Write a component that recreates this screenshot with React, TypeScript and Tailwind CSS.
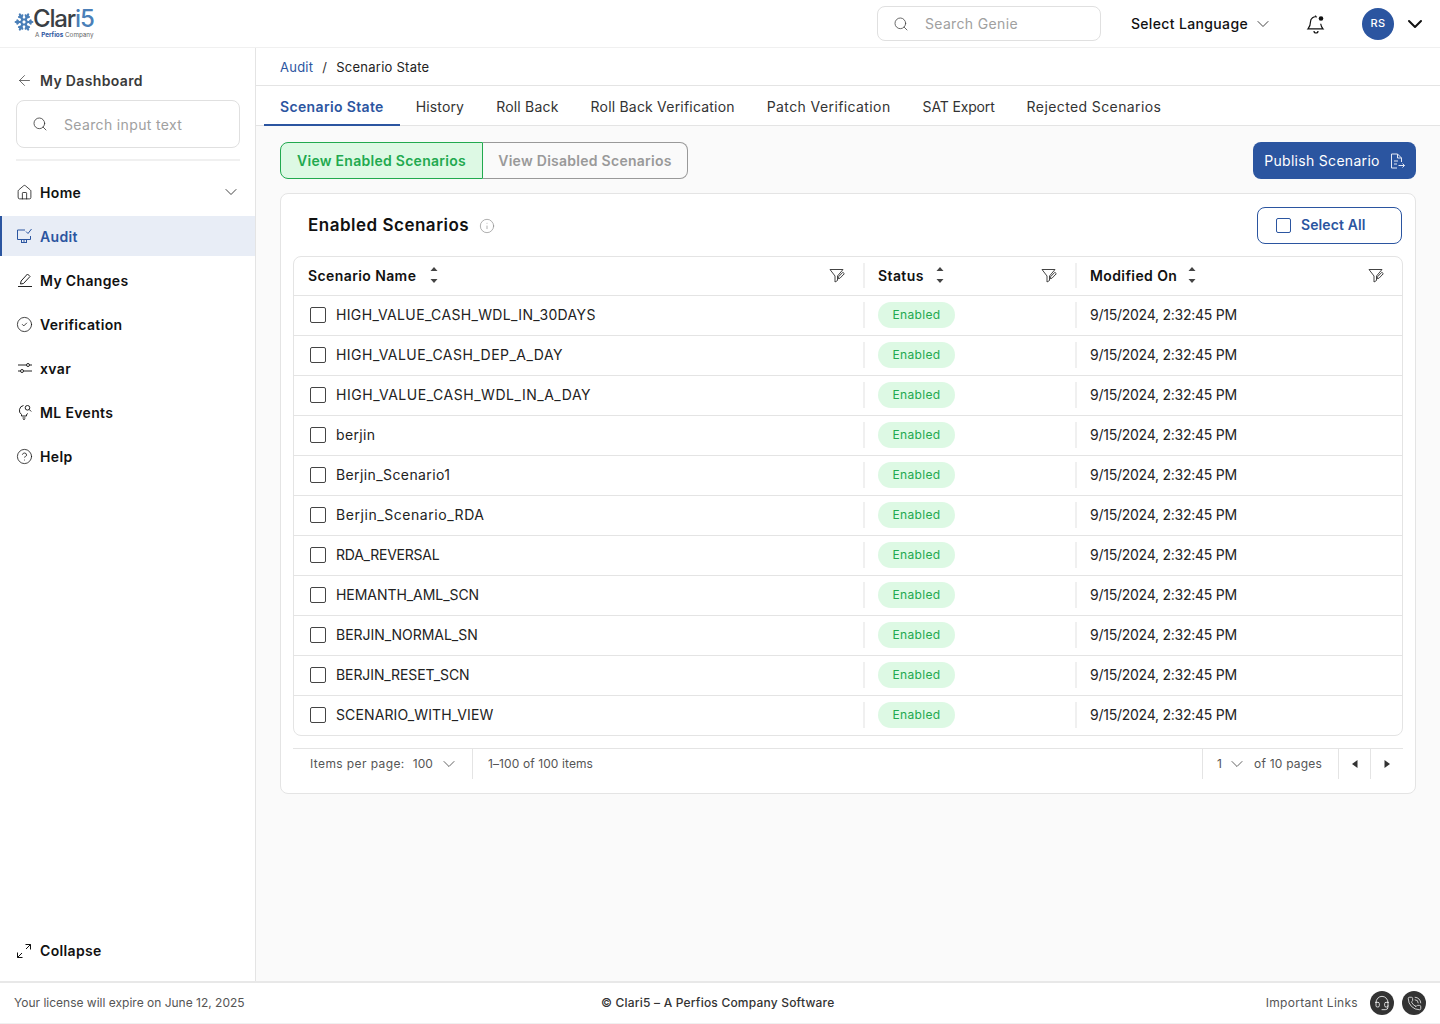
import React from "react";
import {
  ArrowLeft,
  ChevronDown,
  CircleCheck,
  CircleHelp,
  Headset,
  House,
  Info,
  PhoneCall,
  Search,
  Snowflake,
} from "lucide-react";

// per-row tracking: Inter's caps and underscores run at other widths than the original font
const rows = [
  { name: "HIGH_VALUE_CASH_WDL_IN_30DAYS", fit: "tracking-[0.35px]" },
  { name: "HIGH_VALUE_CASH_DEP_A_DAY", fit: "tracking-[0.47px]" },
  { name: "HIGH_VALUE_CASH_WDL_IN_A_DAY", fit: "tracking-[0.53px]" },
  { name: "berjin", fit: "tracking-[0.35px]" },
  { name: "Berjin_Scenario1", fit: "tracking-[0.4px]" },
  { name: "Berjin_Scenario_RDA", fit: "tracking-[0.56px]" },
  { name: "RDA_REVERSAL", fit: "tracking-[-0.23px]" },
  { name: "HEMANTH_AML_SCN", fit: "tracking-[-0.05px]" },
  { name: "BERJIN_NORMAL_SN", fit: "tracking-[-0.03px]" },
  { name: "BERJIN_RESET_SCN", fit: "tracking-[-0.09px]" },
  { name: "SCENARIO_WITH_VIEW", fit: "tracking-[0.13px]" },
];

const tabs = [
  { label: "Scenario State", fit: "tracking-[0.35px]" },
  { label: "History", fit: "tracking-[0.15px]" },
  { label: "Roll Back", fit: "tracking-[0.2px]" },
  { label: "Roll Back Verification", fit: "tracking-[0.2px]" },
  { label: "Patch Verification", fit: "tracking-[0.4px]" },
  { label: "SAT Export", fit: "tracking-[-0.15px]" },
  { label: "Rejected Scenarios", fit: "tracking-[0.4px]" },
];

const PenLine = () => (
  <svg width="16" height="16" viewBox="0 0 16 16" fill="none" stroke="#222" strokeWidth="1">
    <path d="M1 14.5h14M3.5 12l.6-3L10.5 2l2.5 2.5L6.5 11.5z" />
  </svg>
);

const AuditIcon = () => (
  <svg width="16" height="16" viewBox="0 0 16 16" fill="none" stroke="#2b55a0" strokeWidth="1">
    <path d="M9 2H1.5v9.5h13V8M8 11.5V14.5M5 14.5h6M5.5 11.5v3M10.5 11.5v3M10 3.5l2 2L15.5 1" />
  </svg>
);

const SlidersIcon = () => (
  <svg width="16" height="16" viewBox="0 0 16 16" fill="none" stroke="#222" strokeWidth="1">
    <path d="M1 5h8.5M12.5 5H15M1 11h2.5M6.5 11H15" />
    <circle cx="11" cy="5" r="1.5" />
    <circle cx="5" cy="11" r="1.5" />
  </svg>
);

const MlIcon = () => (
  <svg width="16" height="16" viewBox="0 0 16 16" fill="none" stroke="#222" strokeWidth="1">
    <path d="M6.5 1.500A5 5 0 0 0 4.500 10.500V12h5v-1.500a5 5 0 0 0 1.500-1.200M5.500 14h3M6.300 15.500h1.400" />
    <circle cx="10.5" cy="3.8" r="2.3" />
    <path d="M12.200 5.500l2 2" />
  </svg>
);

const CollapseIcon = () => (
  <svg width="16" height="16" viewBox="0 0 16 16" fill="none" stroke="#111" strokeWidth="1">
    <path d="M9.500 1.500h5v5M14.500 1.500L10 6M1.500 9.500v5h5M1.500 14.500L6 10" />
  </svg>
);

const BellIcon = () => (
  <svg width="20" height="20" viewBox="0 0 20 20" fill="none" stroke="#111" strokeWidth="1.2">
    <path d="M11 3a5 5 0 0 0-6.500 4.800c0 4-1.200 5.600-2.500 7h15c-1.100-1.200-2-2.500-2.300-5" />
    <path d="M8 17a2 2 0 0 0 4 0M9.500 1.500v1.300" />
    <circle cx="15" cy="4.5" r="2.3" fill="#111" stroke="none" />
  </svg>
);

const PublishIcon = () => (
  <svg width="15" height="16" viewBox="0 0 15 16" fill="none" stroke="#e4e8f4" strokeWidth="1">
    <path d="M7 15H1.500V1h6L11.500 5v4M7.500 1v4h4M4 8h4M4 11h3M8.500 12.500h6M12.500 10.500l2 2-2 2" />
  </svg>
);

const navItems = [
  { label: "My Changes", icon: <PenLine /> },
  { label: "Verification", icon: <CircleCheck size={17} strokeWidth={1.1} /> },
  { label: "xvar", icon: <SlidersIcon /> },
  { label: "ML Events", icon: <MlIcon /> },
  { label: "Help", icon: <CircleHelp size={17} strokeWidth={1.1} /> },
];

const SortIcon = () => (
  <svg width="10" height="18" viewBox="0 0 10 18" fill="#444">
    <path d="M5 1l3.500 4h-7zM5 17l3.500-4h-7z" />
  </svg>
);

const FilterIcon = () => (
  <svg width="16" height="15" viewBox="0 0 16 15" fill="none" stroke="#444" strokeWidth="1">
    <path d="M1 1.500h13L8.500 8v4.500L6 14V8z" />
    <path d="M9.500 8.800l4.300-4.500 1.500 1.400-4.300 4.500-1.900.5z" fill="#fff" />
  </svg>
);

function ColumnHead({ label, className, gap }: { label: string; className: string; gap: string }) {
  return (
    <div className={`flex items-center justify-between h-full pr-[18px] ${className}`}>
      <div className={`flex items-center ${gap}`}>
        <span className="text-[14px] font-semibold text-[#111] tracking-[0.4px]">{label}</span>
        <SortIcon />
      </div>
      <FilterIcon />
    </div>
  );
}

export default function App() {
  return (
    <div className="h-[1024px] w-[1440px] flex flex-col overflow-hidden bg-[#fafafa] text-[#111] tracking-[0.35px] font-['Inter','Liberation_Sans',sans-serif]">
      <header className="h-[48px] shrink-0 bg-white border-b border-[#f0f0f0] flex items-center pl-[14px] pr-[13px]">
        <div className="flex items-center">
          <Snowflake size={20} strokeWidth={2.6} className="text-[#4a7fb8] -mt-[3px]" />
          <div className="flex flex-col -ml-px">
            <span className="text-[24px] leading-[22px] font-medium tracking-[-1.2px] text-[#3a3f45]">
              Clar<span className="text-[#4a7fb8]">i5</span>
            </span>
            <span className="text-[6.3px] leading-[7px] tracking-normal text-[#666] mt-[2px] pl-[2px]">
              A <b className="text-[#2b55a0]">Perfios</b> Company
            </span>
          </div>
        </div>
        <div className="ml-auto flex items-center">
          <div className="w-[224px] h-[35px] border border-[#e0e0e0] rounded-lg flex items-center pl-[15px] gap-[16px] bg-white">
            <Search size={16} strokeWidth={1.2} className="text-[#444]" />
            <span className="text-[14px] text-[#a0a0a0]">Search Genie</span>
          </div>
          <span className="ml-[30px] text-[14px] font-medium text-[#111]">Select Language</span>
          <ChevronDown size={20} strokeWidth={1.1} className="ml-[5px] text-[#333]" />
          <span className="ml-[33px]"><BellIcon /></span>
          <div className="ml-[36px] w-8 h-8 rounded-full bg-[#2b55a0] text-white text-[11px] font-medium flex items-center justify-center">RS</div>
          <ChevronDown size={24} strokeWidth={2} className="ml-[9px] text-[#111]" />
        </div>
      </header>

      <div className="flex flex-1 min-h-0">
        <aside className="w-[256px] shrink-0 bg-white border-r border-[#e4e4e4] flex flex-col pt-[23px]">
          <div className="flex items-center h-[18px] pl-[16px] gap-[7px]">
            <ArrowLeft size={17} strokeWidth={1.1} className="text-[#444]" />
            <span className="text-[14px] font-semibold text-[#3a3a3a]">My Dashboard</span>
          </div>
          <div className="ml-4 mr-[15px] mt-[11px] h-[48px] border border-[#e0e0e0] rounded-lg flex items-center pl-[15px] gap-[16px]">
            <Search size={16} strokeWidth={1.2} className="text-[#333]" />
            <span className="text-[14px] text-[#a0a0a0]">Search input text</span>
          </div>
          <div className="ml-4 mr-[15px] mt-[11px] border-t-2 border-[#f0f0f0]" />
          <nav className="mt-[11px] flex flex-col gap-[4px]">
            <div className="h-[40px] flex items-center pl-[16px] pr-[14px] gap-[7px]">
              <House size={17} strokeWidth={1.1} />
              <span className="text-[14px] font-semibold">Home</span>
              <ChevronDown size={20} strokeWidth={1.1} className="ml-auto text-[#333]" />
            </div>
            <div className="h-[40px] flex items-center pl-[14px] gap-[8px] bg-[#e8edf6] border-l-2 border-[#2b55a0] text-[#2b55a0]">
              <AuditIcon />
              <span className="text-[14px] font-semibold">Audit</span>
            </div>
            {navItems.map((item) => (
              <div key={item.label} className="h-[40px] flex items-center pl-[16px] gap-[7px]">
                <span className="w-[17px] flex justify-center">{item.icon}</span>
                <span className="text-[14px] font-semibold">{item.label}</span>
              </div>
            ))}
          </nav>
          <div className="mt-auto mb-[20px] flex items-center pl-[16px] gap-[8px]">
            <CollapseIcon />
            <span className="text-[14px] font-semibold">Collapse</span>
          </div>
        </aside>

        <main className="flex-1 min-w-0 flex flex-col">
          <div className="h-[38px] pt-[2px] bg-white border-b border-[#e4e4e4] flex items-center pl-6 text-[13px] tracking-[0.25px] gap-[9px]">
            <span className="text-[#2b55a0]">Audit</span>
            <span className="text-[#333]">/</span>
            <span className="text-[#222]">Scenario State</span>
          </div>
          <div className="h-[40px] bg-white border-b border-[#e4e4e4] flex pl-2 text-[14px]">
            {tabs.map((t, i) => (
              <div
                key={t.label}
                className={`h-[40px] flex items-center px-4 ${t.fit} ${i === 0 ? "pt-[2px] border-b-2 border-[#2b55a0] text-[#2b55a0] font-semibold" : "text-[#333]"}`}
              >
                {t.label}
              </div>
            ))}
          </div>

          <div className="px-6 pt-4">
            <div className="flex items-start justify-between h-[38px]">
              <div className="flex h-[37px] text-[14px] font-semibold tracking-[0.27px]">
                <div className="w-[203px] flex items-center justify-center bg-[#ddf9e4] border border-[#22a94f] rounded-l-lg text-[#22a94f]">View Enabled Scenarios</div>
                <div className="w-[205px] flex items-center justify-center border border-l-0 border-[#999] rounded-r-lg text-[#999]">View Disabled Scenarios</div>
              </div>
              <div className="w-[163px] h-[37px] rounded-lg bg-[#2b55a0] text-white flex items-center justify-center gap-[10px] text-[14px] tracking-[0.3px]">
                Publish Scenario
                <PublishIcon />
              </div>
            </div>

            <section className="mt-[13px] h-[601px] bg-white border border-[#e4e4e4] rounded-lg px-3 pt-[13px]">
              <div className="flex items-center justify-between h-[37px] pl-[15px] pr-px">
                <div className="flex items-center gap-[10px]">
                  <span className="text-[17px] font-semibold tracking-[0.5px]">Enabled Scenarios</span>
                  <Info size={16} strokeWidth={1} className="text-[#888]" />
                </div>
                <div className="w-[145px] h-[37px] border border-[#2b55a0] rounded-lg flex items-center pl-[18px] gap-[10px] text-[#2b55a0] text-[14px] font-semibold tracking-[0.1px]">
                  <span className="w-[15px] h-[15px] border-[1.5px] border-[#2b55a0] rounded-[2px]" />
                  <span className="pb-[2px]">Select All</span>
                </div>
              </div>

              <div className="mt-3 border border-[#e4e4e4] rounded-lg">
                <div className="grid grid-cols-[569px_212px_1fr] h-[39px] pb-[2px] border-b border-[#e4e4e4] items-center">
                  <ColumnHead label="Scenario Name" className="pl-[14px]" gap="gap-[13px]" />
                  <div className="h-[25px] border-l-2 border-[#f0f0f0]"><ColumnHead label="Status" className="pl-[13px]" gap="gap-[11px]" /></div>
                  <div className="h-[25px] border-l-2 border-[#f0f0f0]"><ColumnHead label="Modified On" className="pl-[13px]" gap="gap-[10px]" /></div>
                </div>
                {rows.map((row, i) => (
                  <div
                    key={row.name}
                    className={`grid grid-cols-[569px_212px_1fr] items-center pb-[2px] ${i < rows.length - 1 ? "h-[40px] border-b border-[#e4e4e4]" : "h-[39px]"}`}
                  >
                    <div className="flex items-center pl-4 gap-[10px]">
                      <span className="w-[16px] h-[16px] border-[1.5px] border-[#444] rounded-[2px]" />
                      <span className={`text-[14px] text-[#222] ${row.fit}`}>{row.name}</span>
                    </div>
                    <div className="h-[26px] border-l-2 border-[#f0f0f0] flex items-center pl-[13px]">
                      <span className="w-[77px] h-[26px] rounded-full bg-[#ddf9e4] text-[#22a94f] text-[12px] flex items-center justify-center">Enabled</span>
                    </div>
                    <div className="h-[26px] border-l-2 border-[#f0f0f0] flex items-center pl-[13px] text-[14px] tracking-[-0.25px] text-[#222]">9/15/2024, 2:32:45 PM</div>
                  </div>
                ))}
              </div>

              <div className="mt-3 border-t border-[#e4e4e4] h-[31px] flex items-stretch text-[12px] tracking-[0.1px] text-[#555]">
                <div className="flex items-center pl-[17px] pr-[13px] border-r border-[#e4e4e4] w-[180px]">
                  <span className="tracking-[0.4px]">Items per page:</span>
                  <span className="ml-2">100</span>
                  <ChevronDown size={20} strokeWidth={1.1} className="ml-auto" />
                </div>
                <div className="flex items-center pl-[15px]">1–100 of 100 items</div>
                <div className="ml-auto flex items-center w-[136px] border-l border-[#e4e4e4] pl-[14px] gap-[5px] tracking-[0.2px]">
                  <span>1</span>
                  <ChevronDown size={20} strokeWidth={1.1} />
                  <span className="ml-[2px]">of 10 pages</span>
                </div>
                <div className="w-[32px] border-l border-[#e4e4e4] flex items-center justify-center">
                  <svg width="6" height="8" viewBox="0 0 6 8" fill="#333"><path d="M5.500 0v8L0 4z" /></svg>
                </div>
                <div className="w-[32px] mr-px border-l border-[#e4e4e4] flex items-center justify-center">
                  <svg width="6" height="8" viewBox="0 0 6 8" fill="#333"><path d="M.5 0v8L6 4z" /></svg>
                </div>
              </div>
            </section>
          </div>
        </main>
      </div>

      <footer className="h-[43px] shrink-0 bg-white border-t-2 border-b border-t-[#e8e8e8] border-b-[#f0f0f0] flex items-center justify-between pl-[14px] pr-[14px] text-[12px] tracking-normal text-[#555] relative">
        <span>Your license will expire on June 12, 2025</span>
        <span className="absolute left-[601px] font-medium tracking-[0.2px] text-[#333]">© Clari5 – A Perfios Company Software</span>
        <div className="flex items-center gap-2">
          <span className="mr-1 tracking-[0.3px]">Important Links</span>
          <span className="w-6 h-6 rounded-full bg-[#333] flex items-center justify-center">
            <Headset size={16} strokeWidth={1.2} className="text-white" />
          </span>
          <span className="w-6 h-6 rounded-full bg-[#333] flex items-center justify-center">
            <PhoneCall size={15} strokeWidth={1.2} className="text-white" />
          </span>
        </div>
      </footer>
    </div>
  );
}
